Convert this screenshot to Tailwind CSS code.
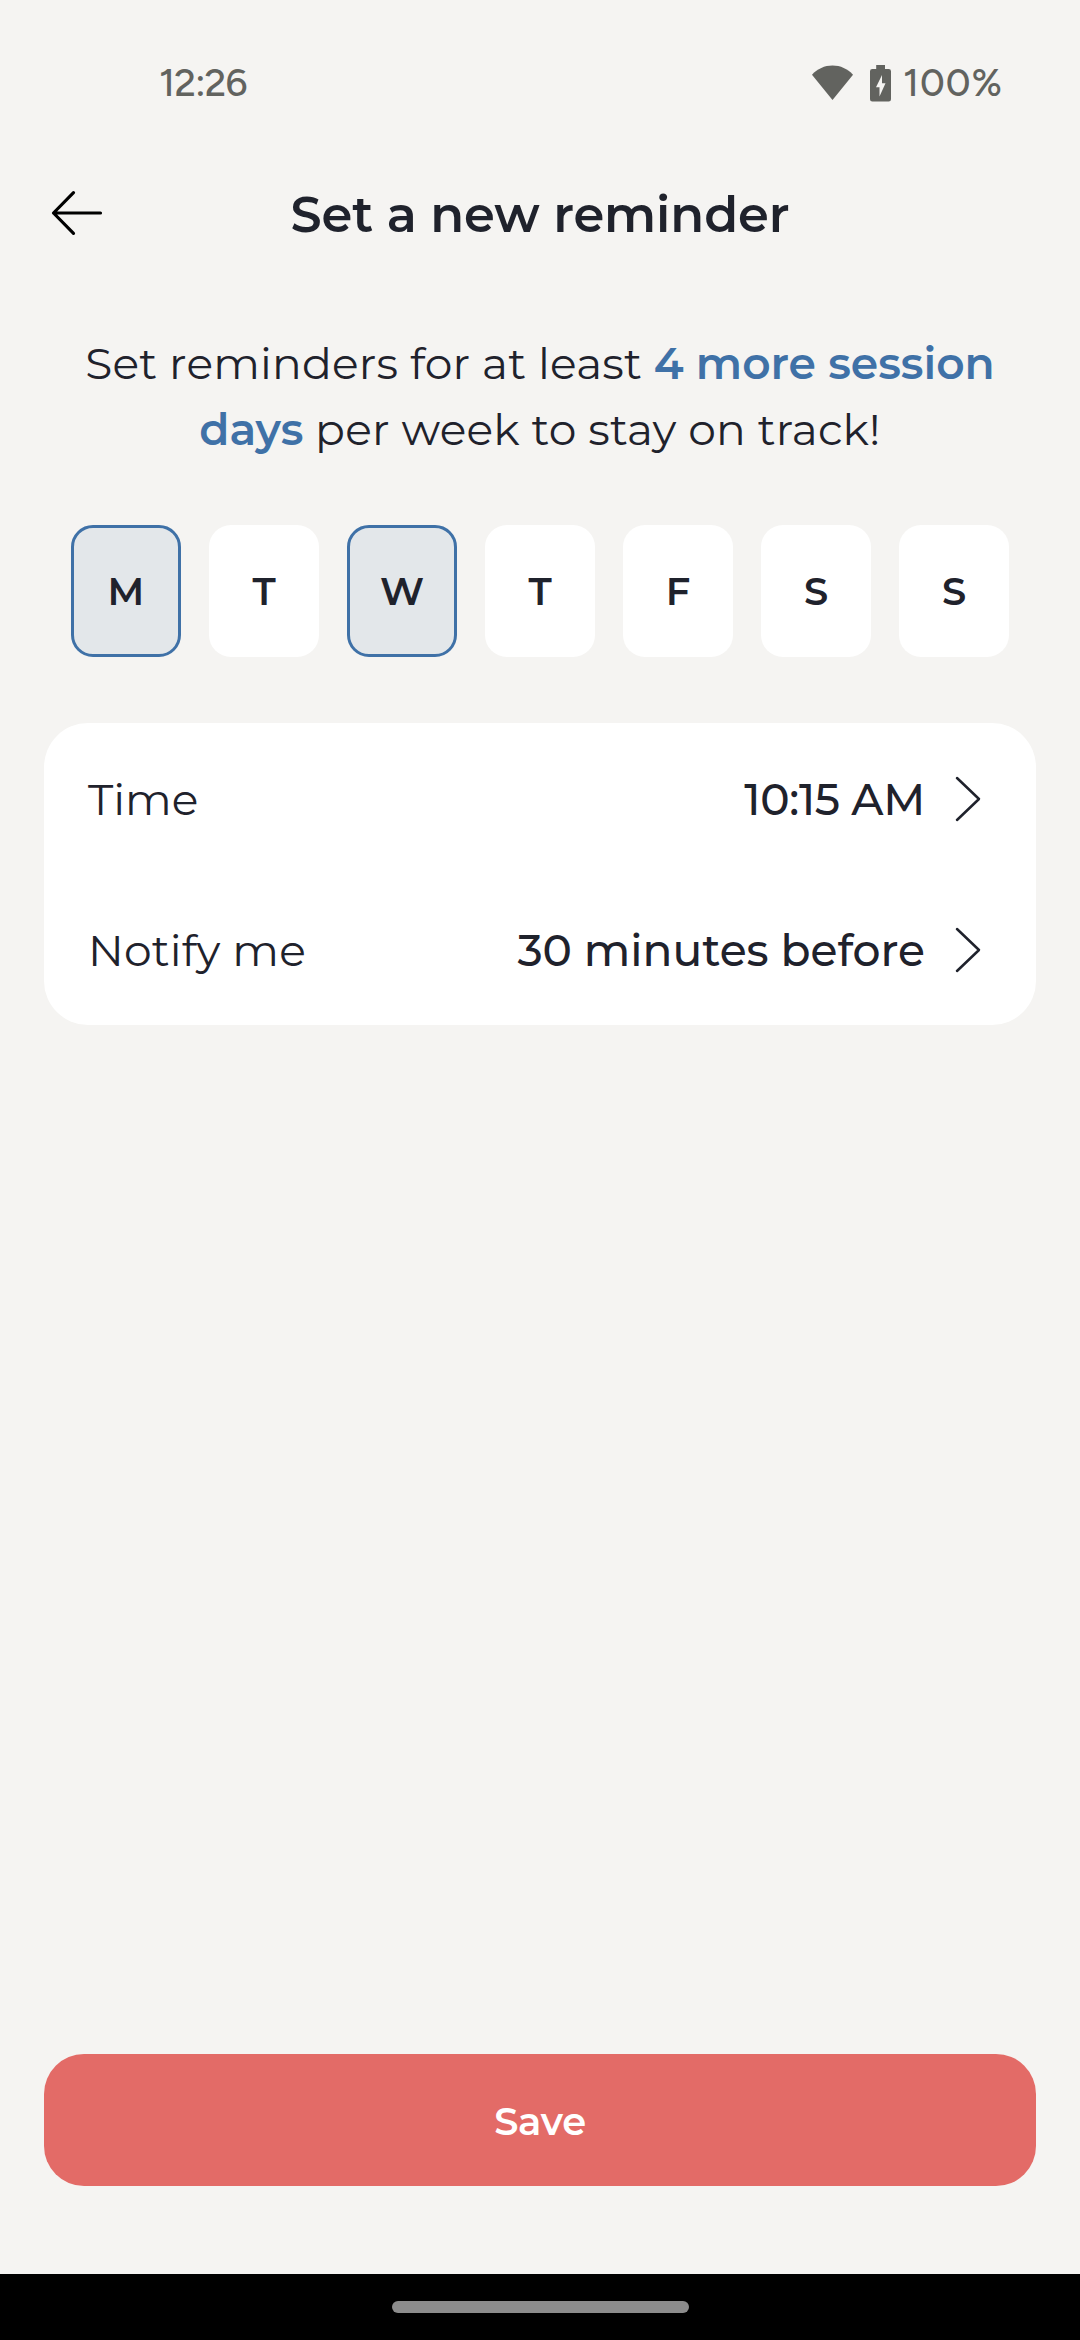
<!DOCTYPE html>
<html lang="en">
<head>
<meta charset="utf-8">
<title>Set a new reminder</title>
<script src="https://cdn.jsdelivr.net/npm/@tailwindcss/browser@4"></script>
</head>
<body class="flex h-[2340px] w-[1080px] flex-col bg-[#f5f4f2] font-['Montserrat','Inter',sans-serif] text-[#1f222c]">

  <!-- Status bar -->
  <div class="flex h-[166px] items-center justify-between pl-[159px] pr-[77px] font-['Figtree','Lato',sans-serif] text-[38.5px] font-medium leading-none text-[#62635f]">
    <span class="tracking-[-0.8px]">12:26</span>
    <div class="flex items-center">
      <svg class="h-[36px] w-[41px]" viewBox="0 0 41 36" fill="#62635f"><path d="M0 9.7C5.500 3.800 12.500.500 20.500.500S35.500 3.800 41 9.700L20.500 35z"/></svg>
      <svg class="ml-[17px] h-[37px] w-[21px]" viewBox="0 0 21 37"><path fill="#62635f" d="M6.200 0h8.800v4h3.700q2.300 0 2.300 2.300v28q0 2.300-2.300 2.300H2.300Q0 36.600 0 34.300v-28Q0 4 2.300 4h3.900z"/><path fill="#f5f4f2" d="M12 10v8.300h3.500L9.500 31.500v-9.300H6z"/></svg>
      <span class="ml-[12px] tracking-[1px]">100%</span>
    </div>
  </div>

  <!-- Header -->
  <header class="grid h-[96px] grid-cols-[1fr_auto_1fr] items-center px-[51px]">
    <svg class="-mt-[3px] h-[46px] w-[52px]" viewBox="0 0 52 46" fill="none" stroke="#000" stroke-width="3.2" stroke-linecap="round" stroke-linejoin="round"><path d="M22.500 2.700 2.500 23l20 20.300M2.500 23H49.500"/></svg>
    <h1 class="pt-[2px] text-[49.5px] font-semibold leading-none tracking-[-0.1px]">Set a new reminder</h1>
  </header>

  <p class="mt-[68px] text-center text-[44px] leading-[66px] tracking-[0.2px]">Set reminders for at least <span class="font-semibold tracking-normal text-[#3f71a7]">4 more session<br>days</span> per week to stay on track!</p>

  <!-- Weekdays -->
  <div class="mt-[63px] flex justify-between px-[71px] text-[38.5px] font-semibold">
    <div class="flex h-[132px] w-[110px] items-center justify-center rounded-[22px] border-3 border-[#3f71a7] bg-[#e3e7ea] pt-[2px]">M</div>
    <div class="flex h-[132px] w-[110px] items-center justify-center rounded-[22px] bg-white pt-[2px]">T</div>
    <div class="flex h-[132px] w-[110px] items-center justify-center rounded-[22px] border-3 border-[#3f71a7] bg-[#e3e7ea] pt-[2px]">W</div>
    <div class="flex h-[132px] w-[110px] items-center justify-center rounded-[22px] bg-white pt-[2px]">T</div>
    <div class="flex h-[132px] w-[110px] items-center justify-center rounded-[22px] bg-white pt-[2px]">F</div>
    <div class="flex h-[132px] w-[110px] items-center justify-center rounded-[22px] bg-white pt-[2px]">S</div>
    <div class="flex h-[132px] w-[110px] items-center justify-center rounded-[22px] bg-white pt-[2px]">S</div>
  </div>

  <!-- Settings -->
  <div class="mx-[44px] mt-[66px] h-[302px] rounded-[44px] bg-white pl-[44px] pr-[54px] text-[44px]">
    <div class="flex h-[151px] items-center">
      <span class="flex-1">Time</span>
      <span class="font-medium tracking-[-0.3px]">10:15 AM</span>
      <svg class="ml-[29px] h-[46px] w-[28px]" viewBox="0 0 28 46" fill="none" stroke="#1f222c" stroke-width="2.500" stroke-linecap="round" stroke-linejoin="round"><path d="M3 2 25 23 3 44"/></svg>
    </div>
    <div class="flex h-[151px] items-center">
      <span class="flex-1 tracking-[0.2px]">Notify me</span>
      <span class="font-medium">30 minutes before</span>
      <svg class="ml-[29px] h-[46px] w-[28px]" viewBox="0 0 28 46" fill="none" stroke="#1f222c" stroke-width="2.500" stroke-linecap="round" stroke-linejoin="round"><path d="M3 2 25 23 3 44"/></svg>
    </div>
  </div>

  <button class="mx-[44px] mt-auto h-[132px] shrink-0 rounded-[40px] bg-[#e36b67] pt-[3px] text-[38.5px] font-semibold tracking-[-0.3px] text-white">Save</button>

  <!-- Gesture navigation -->
  <div class="mt-[88px] flex h-[66px] shrink-0 items-center justify-center bg-black">
    <div class="h-[12px] w-[297px] rounded-full bg-[#8c8c8c]"></div>
  </div>
</body>
</html>
